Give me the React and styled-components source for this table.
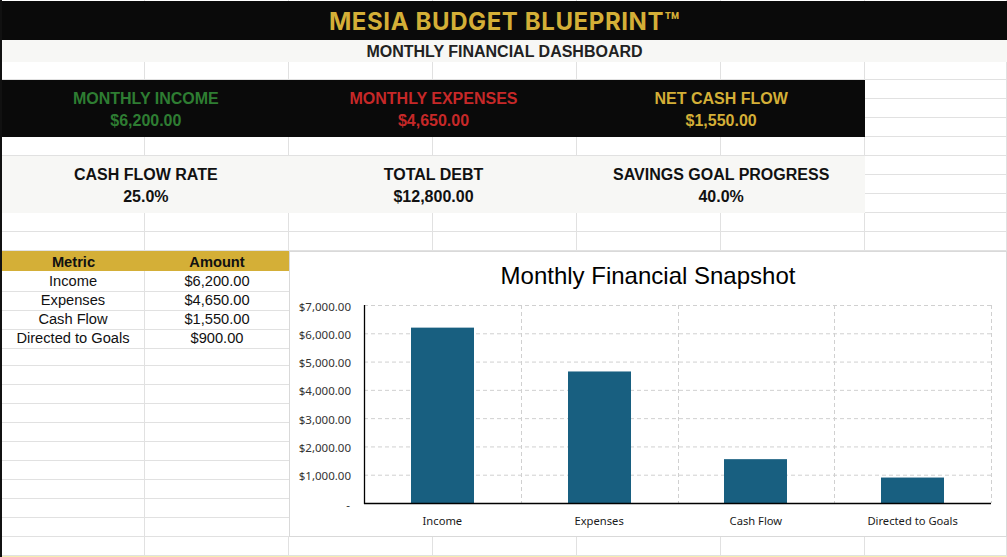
import React from "react";
import styled, { createGlobalStyle } from "styled-components";

const GlobalStyle = createGlobalStyle`
  html, body { margin: 0; padding: 0; background: #ffffff; }
  body { width: 1007px; height: 557px; overflow: hidden; }
  * { box-sizing: border-box; }
`;

const COLS = "143px 144px 144px 144px 144px 144px 142px";
const GRID = "#e1e1e1";

const Page = styled.div`
  width: 1007px;
  height: 557px;
  border-left: 2px solid #111111;
  overflow: hidden;
  font-family: "Liberation Sans", Arial, sans-serif;
  display: flex;
  flex-direction: column;
`;

const TopStrip = styled.div`
  height: 1px;
  display: grid;
  grid-template-columns: ${COLS};
`;

const StripCell = styled.div`
  border-right: 1px solid ${GRID};
`;

const TitleBar = styled.div`
  height: 39px;
  background: #0a0a0a;
  display: flex;
  align-items: center;
  justify-content: center;
  color: #d4af37;
  font-family: "Inter", "Lato", sans-serif;
  font-weight: 700;
  font-size: 24px;
  letter-spacing: 0.6px;
  padding-top: 1px;
`;

const SubtitleBar = styled.div`
  height: 22px;
  background: #f7f7f5;
  display: flex;
  align-items: center;
  justify-content: center;
  color: #222222;
  font-weight: 700;
  font-size: 16px;
  padding-top: 1px;
`;

const SheetRow = styled.div`
  display: grid;
  grid-template-columns: ${COLS};
  height: ${(p) => p.$h}px;
  flex: none;
`;

const Cell = styled.div`
  border-right: 1px solid ${GRID};
  border-bottom: 1px solid ${GRID};
`;

const KpiBand = styled.div`
  display: grid;
  grid-template-columns: 863px 142px;
  height: 57px;
  flex: none;
`;

const KpiPanel = styled.div`
  background: ${(p) => p.$bg};
  display: grid;
  grid-template-columns: repeat(3, 1fr);
  align-items: center;
`;

const KpiItem = styled.div`
  display: flex;
  flex-direction: column;
  align-items: center;
  font-weight: 700;
  font-size: 16px;
  color: ${(p) => p.$color};
  padding-top: 3px;
`;

const KpiLabel = styled.div`
  line-height: 22px;
`;

const KpiValue = styled.div`
  line-height: 22px;
`;

const SideStack = styled.div`
  display: grid;
  grid-template-rows: repeat(3, 19px);
`;

const Lower = styled.div`
  display: grid;
  grid-template-columns: 287px 718px;
  height: 286px;
  flex: none;
`;

const DataTable = styled.div`
  display: flex;
  flex-direction: column;
`;

const TableHead = styled.div`
  display: grid;
  grid-template-columns: 143px 144px;
  height: 20px;
  background: #d4af37;
  font-weight: 700;
  font-size: 14.67px;
  color: #111111;
  align-items: center;
  text-align: center;
  padding-top: 1px;
`;

const TableRow = styled.div`
  display: grid;
  grid-template-columns: 143px 144px;
  height: 19px;
`;

const TableCell = styled.div`
  border-bottom: 1px solid ${GRID};
  border-right: ${(p) => (p.$last ? "none" : `1px solid ${GRID}`)};
  font-size: 14.67px;
  color: #111111;
  text-align: center;
  line-height: 20px;
`;

const ChartBox = styled.div`
  border: 1px solid #d9d9d9;
  background: #ffffff;
  display: flex;
  flex-direction: column;
`;

const ChartTitle = styled.div`
  height: 46px;
  padding-top: 11px;
  text-align: center;
  font-size: 24px;
  line-height: 26px;
  color: #000000;
`;

const ChartSvg = styled.svg`
  display: block;
  font-family: "Noto Sans", "Open Sans", sans-serif;
`;

const BottomLine = styled.div`
  height: 1px;
  background: #f6ecb0;
  margin-left: -2px;
  flex: none;
`;

const kpiTop = [
  { label: "MONTHLY INCOME", value: "$6,200.00", color: "#2e7d32" },
  { label: "MONTHLY EXPENSES", value: "$4,650.00", color: "#c62828" },
  { label: "NET CASH FLOW", value: "$1,550.00", color: "#d4af37" },
];

const kpiBottom = [
  { label: "CASH FLOW RATE", value: "25.0%", color: "#111111" },
  { label: "TOTAL DEBT", value: "$12,800.00", color: "#111111" },
  { label: "SAVINGS GOAL PROGRESS", value: "40.0%", color: "#111111" },
];

const rows = [
  ["Income", "$6,200.00", 6200],
  ["Expenses", "$4,650.00", 4650],
  ["Cash Flow", "$1,550.00", 1550],
  ["Directed to Goals", "$900.00", 900],
];

function BlankRow({ h }) {
  return (
    <SheetRow $h={h}>
      {Array.from({ length: 7 }).map((_, i) => (
        <Cell key={i} />
      ))}
    </SheetRow>
  );
}

function Kpis({ items, bg }) {
  return (
    <KpiBand>
      <KpiPanel $bg={bg}>
        {items.map((k) => (
          <KpiItem key={k.label} $color={k.color}>
            <KpiLabel>{k.label}</KpiLabel>
            <KpiValue>{k.value}</KpiValue>
          </KpiItem>
        ))}
      </KpiPanel>
      <SideStack>
        <Cell />
        <Cell />
        <Cell />
      </SideStack>
    </KpiBand>
  );
}

function Chart() {
  const W = 716;
  const H = 238;
  const left = 74;
  const right = 701;
  const top = 7;
  const bottom = 205;
  const max = 7000;
  const y = (v) => bottom - (v / max) * (bottom - top);
  const cat = (right - left) / 4;
  const ticks = [1000, 2000, 3000, 4000, 5000, 6000, 7000];
  const fmt = (v) => "$" + v.toLocaleString("en-US") + ".00";
  return (
    <ChartBox>
      <ChartTitle>Monthly Financial Snapshot</ChartTitle>
      <ChartSvg width={W} height={H} viewBox={`0 0 ${W} ${H}`}>
        {ticks.map((t) => (
          <line
            key={t}
            x1={left}
            x2={right}
            y1={y(t) + 0.5}
            y2={y(t) + 0.5}
            stroke="#d0d0d0"
            strokeWidth="1"
            strokeDasharray="4 3"
          />
        ))}
        {[1, 2, 3, 4].map((k) => (
          <line
            key={k}
            x1={Math.round(left + cat * k) + 0.5}
            x2={Math.round(left + cat * k) + 0.5}
            y1={top}
            y2={bottom}
            stroke="#d0d0d0"
            strokeWidth="1"
            strokeDasharray="4 3"
          />
        ))}
        {rows.map(([name, , v], i) => {
          const cx = left + cat * (i + 0.5);
          return (
            <rect
              key={name}
              x={Math.round(cx - 31.5)}
              y={y(v)}
              width={63}
              height={bottom - y(v)}
              fill="#185f80"
            />
          );
        })}
        <line x1={left + 0.5} x2={left + 0.5} y1={top} y2={bottom + 1} stroke="#000" strokeWidth="1.3" />
        <line x1={left} x2={right} y1={bottom + 0.5} y2={bottom + 0.5} stroke="#000" strokeWidth="1.3" />
        {ticks.map((t) => (
          <text
            key={t}
            x={61}
            y={y(t) + 1}
            textAnchor="end"
            dominantBaseline="central"
            fontSize="11.5"
            fill="#333333"
          >
            {fmt(t)}
          </text>
        ))}
        <text x={60} y={bottom + 1} textAnchor="end" dominantBaseline="central" fontSize="11.5" fill="#333333">
          -
        </text>
        {rows.map(([name], i) => (
          <text
            key={name}
            x={left + cat * (i + 0.5)}
            y={222}
            textAnchor="middle"
            dominantBaseline="central"
            fontSize="11.2"
            fill="#1a1a1a"
          >
            {name}
          </text>
        ))}
      </ChartSvg>
    </ChartBox>
  );
}

export default function App() {
  return (
    <>
      <GlobalStyle />
      <Page>
        <TopStrip>
          {Array.from({ length: 7 }).map((_, i) => (
            <StripCell key={i} />
          ))}
        </TopStrip>
        <TitleBar>MESIA BUDGET BLUEPRINT™</TitleBar>
        <SubtitleBar>MONTHLY FINANCIAL DASHBOARD</SubtitleBar>
        <BlankRow h={18} />
        <Kpis items={kpiTop} bg="#0a0a0a" />
        <BlankRow h={19} />
        <Kpis items={kpiBottom} bg="#f7f7f5" />
        <BlankRow h={19} />
        <BlankRow h={19} />
        <Lower>
          <DataTable>
            <TableHead>
              <div>Metric</div>
              <div>Amount</div>
            </TableHead>
            {rows.map(([name, amt]) => (
              <TableRow key={name}>
                <TableCell>{name}</TableCell>
                <TableCell $last>{amt}</TableCell>
              </TableRow>
            ))}
            {Array.from({ length: 10 }).map((_, i) => (
              <TableRow key={"b" + i}>
                <TableCell />
                <TableCell $last />
              </TableRow>
            ))}
          </DataTable>
          <Chart />
        </Lower>
        <BlankRow h={19} />
        <BottomLine />
      </Page>
    </>
  );
}
